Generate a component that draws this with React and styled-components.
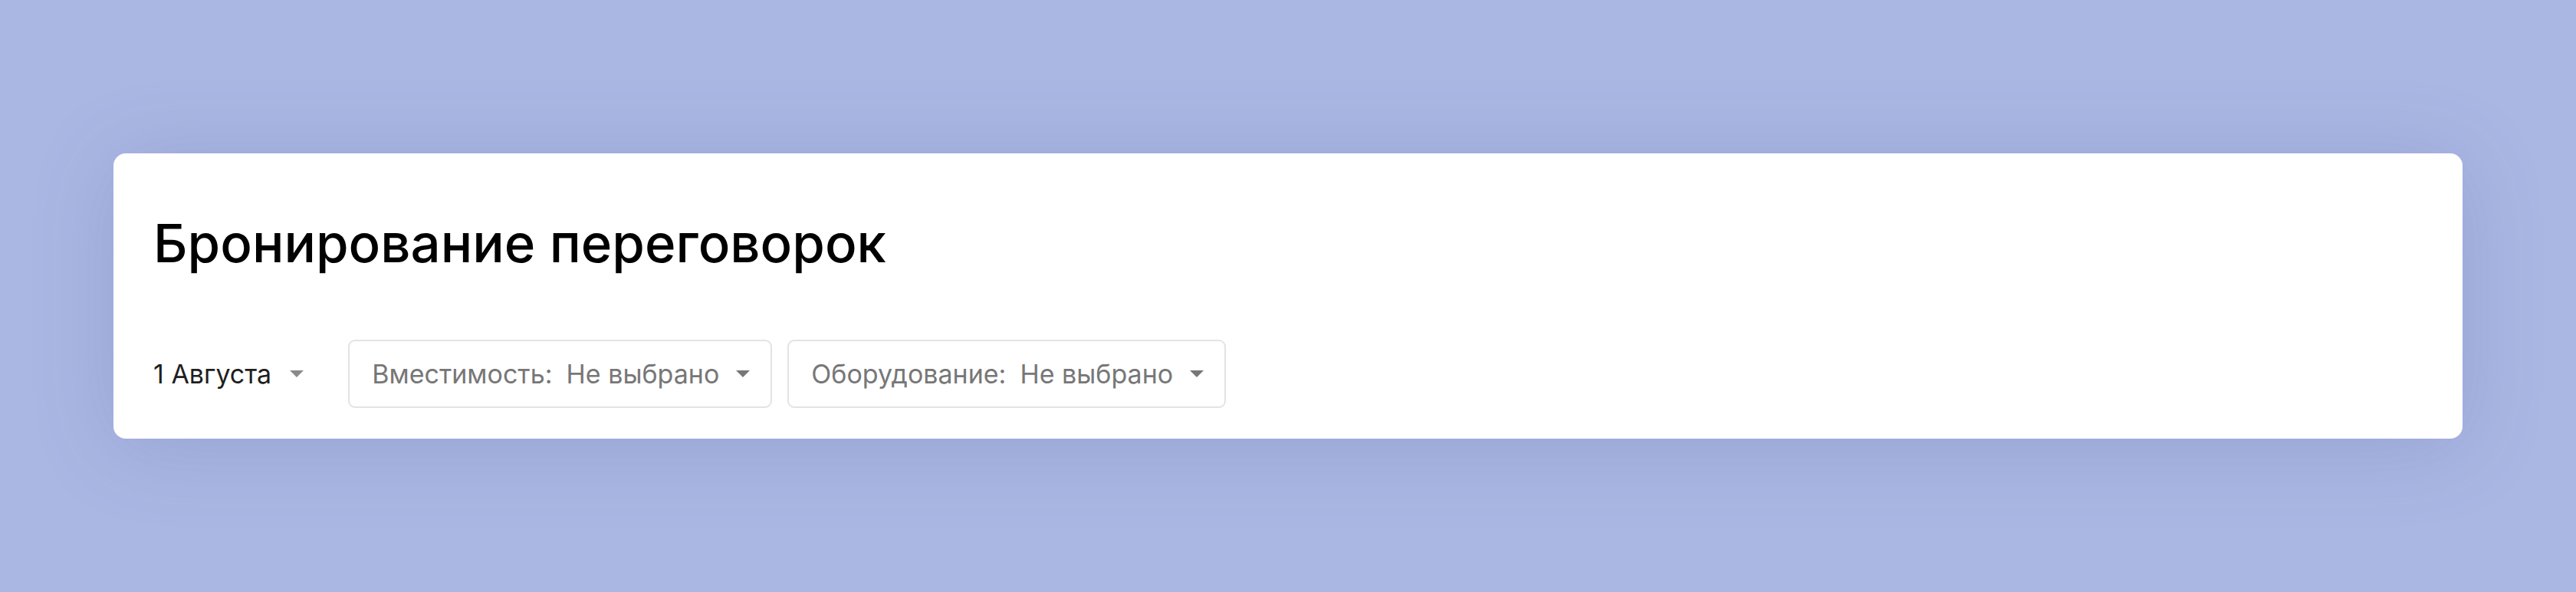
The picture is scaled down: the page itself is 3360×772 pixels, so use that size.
import React from "react";
import styled, { createGlobalStyle } from "styled-components";

const GlobalStyle = createGlobalStyle`
  html, body {
    margin: 0;
    padding: 0;
    background: #aab7e3;
  }

  body {
    font-family: Inter, "Noto Sans", sans-serif;
  }
`;

const filters = [
  { label: "Вместимость:", value: "Не выбрано" },
  { label: "Оборудование:", value: "Не выбрано" },
];

const Caret = ({ color }) => (
  <svg width="18" height="9" viewBox="0 0 18 9">
    <path d="M0 0 L18 0 L9 9 Z" fill={color} />
  </svg>
);

export default function App() {
  return (
    <>
      <GlobalStyle />
      <Page>
        <Card>
          <Title>Бронирование переговорок</Title>
          <FilterRow>
            <DatePicker>
              <span>1 Августа</span>
              <Caret color="#8a8a8a" />
            </DatePicker>
            {filters.map((item, index) => (
              <Select key={index}>
                <Label>{item.label}</Label>
                <Value>{item.value}</Value>
                <Caret color="#777" />
              </Select>
            ))}
          </FilterRow>
        </Card>
      </Page>
    </>
  );
}

const Page = styled.div`
  display: flex;
  align-items: center;
  box-sizing: border-box;
  height: 772px;
  padding: 0 148px 0 148px;
`;

const Card = styled.div`
  flex: 1;
  box-sizing: border-box;
  height: 372px;
  padding: 83px 52px 40px 52px;
  background: #fff;
  border-radius: 16px;
  box-shadow: 0 10px 110px rgba(70, 85, 150, 0.2);
`;

const Title = styled.h1`
  margin: 0;
  font-size: 69px;
  line-height: 1;
  font-weight: 500;
  color: #000;
`;

const FilterRow = styled.div`
  display: flex;
  align-items: center;
  margin-top: 91px;
`;

const DatePicker = styled.div`
  display: flex;
  align-items: center;
  gap: 24px;
  margin-right: 58px;
  font-size: 34px;
  color: #1f1f1f;
`;

const Select = styled.div`
  display: flex;
  align-items: center;
  box-sizing: border-box;
  height: 89px;
  padding: 0 27px 0 29px;
  margin-right: 20px;
  border: 2px solid #e3e3e3;
  border-radius: 9px;
  font-size: 34px;
  color: #777;

  svg {
    margin-left: 22px;
  }
`;

const Label = styled.span`
  margin-right: 18px;
`;

const Value = styled.span``;
